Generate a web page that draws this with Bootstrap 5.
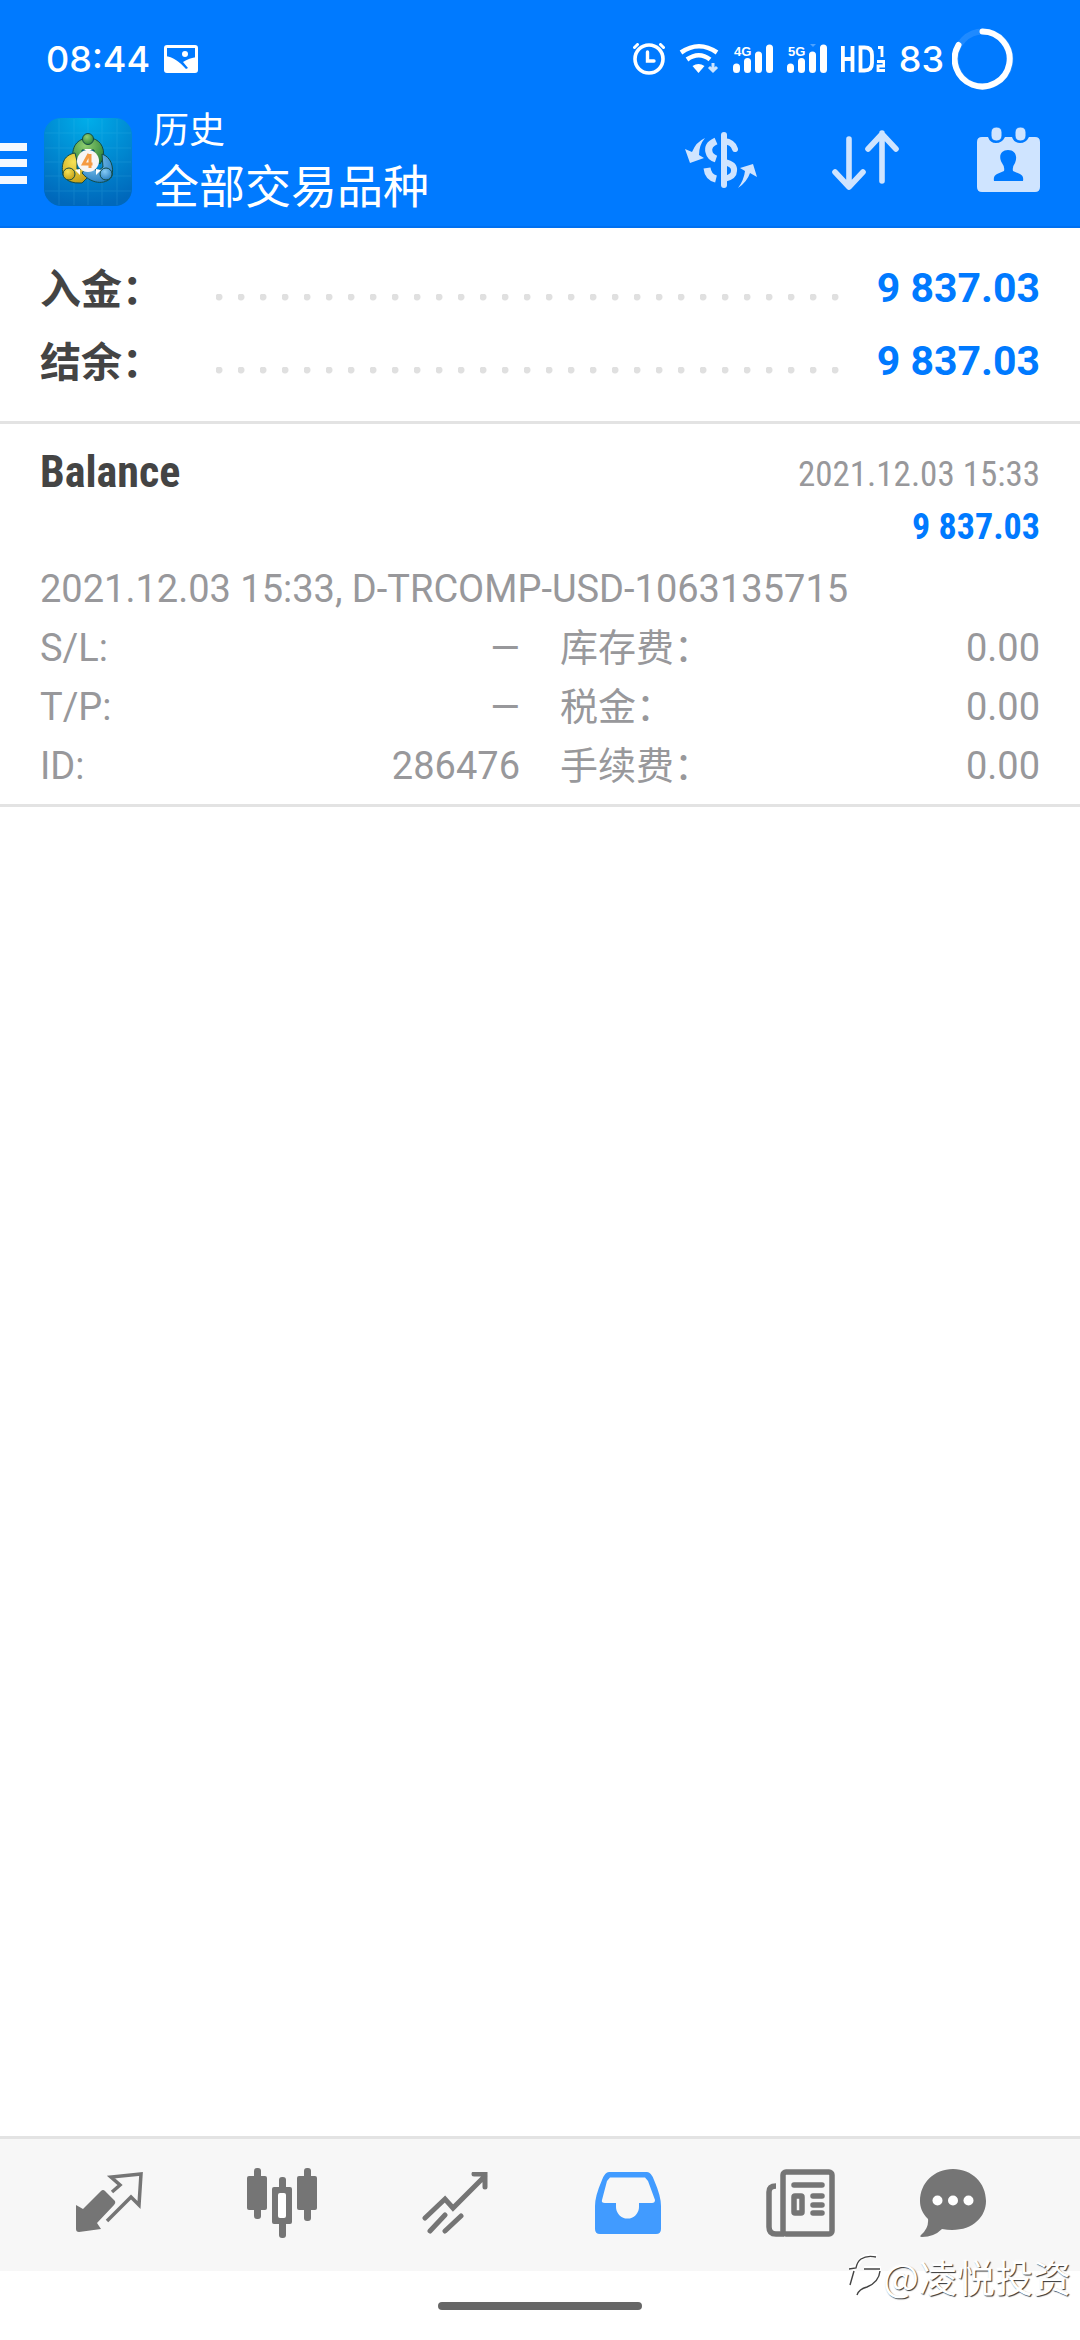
<!DOCTYPE html>
<html lang="zh-CN">
<head>
<meta charset="utf-8">
<meta name="viewport" content="width=device-width, initial-scale=1">
<title>历史</title>
<link href="https://cdn.jsdelivr.net/npm/bootstrap@5.3.0/dist/css/bootstrap.min.css" rel="stylesheet">
<style>
body{font-family:Roboto,"Noto Sans CJK SC",sans-serif;background:#fff;color:#444}
svg{display:block;flex:none}
.top-area{background:#007aff;border-bottom:2px solid #0070f0;color:#fff}
.status{height:106px;padding:12px 66px 0 46px;font:500 36px/48px Inter,sans-serif}
.status .tiny-net{font:700 13px "Liberation Sans",sans-serif}
.status-icons{gap:14px}
.appbar{height:112px;margin-bottom:8px;padding-right:40px}
.appbar button{background:none;border:0;padding:0;color:#cfe4ff}
.app-logo{margin-left:17px}
.appbar .sort-btn{margin:0 78px 0 74px}
.head-sub{font-size:36px;line-height:50px}
.head-main{font-size:46px;line-height:62px}
.head-text{font-family:"Noto Sans CJK SC",sans-serif;margin:0 auto 8px 21px}
.summary{padding:22px 40px 25px;border-bottom:3px solid #e3e3e3;font-weight:700}
.sum-row{height:73px}
.sum-label{width:176px;font:700 41px/73px "Noto Sans CJK SC",sans-serif}
.sum-dots{height:7px;margin:22px 31px 0 0;background:radial-gradient(circle at 3px 3px,#e0e0e0 3px,transparent 4px) 0 0/22px 7px repeat-x}
.sum-value{font-size:41px;line-height:73px;padding-top:4px;color:#007aff}
.deal{padding:21px 40px 8px;border-bottom:3px solid #e3e3e3;color:#98989b}
.narrow{font-family:"Roboto Condensed","Liberation Sans Narrow",Roboto,sans-serif}
.deal-name{font-size:44px;line-height:54px;color:#444}
.deal-time{font-size:35px;line-height:60px}
.deal-sum{font-size:36px;line-height:44px;color:#007aff}
.deal-info{font-size:38px;line-height:59px;padding-top:11px}
.deal-info .info-col{column-gap:40px}
.tabs{background:#f7f7f7;border-top:3px solid #e3e3e3;height:135px;padding:0 61px 0 22px}
.tabs a{flex:173 1 0;height:128px;color:#757575;display:flex;align-items:center;justify-content:center}
.tabs a:last-child{flex-grow:132}
.tabs a.active{color:#419bff}
.home-zone{height:69px}
.home-pill{width:204px;height:8px;border-radius:4px;background:#666}
.watermark{right:9px;bottom:40px;color:#fff;font:38px/48px "Noto Sans CJK SC",sans-serif;text-shadow:1px 1px 1px #333,0 0 3px #fff}
</style>
</head>
<body>
<div class="d-flex flex-column min-vh-100 position-relative">
<header class="top-area">
  <div class="status d-flex align-items-center justify-content-between">
    <div class="d-flex align-items-center status-icons">
      <span>08:44</span>
      <svg width="34" height="28" viewBox="0 0 34 28"><rect x="1.5" y="1.5" width="31" height="25" rx="1.5" fill="none" stroke="#fff" stroke-width="3"/><path d="M1 11C9 12 15 16 22 24L24 23 19 17Q25 13 33 12V27H1Z" fill="#fff"/><circle cx="21" cy="9" r="3" fill="#fff"/></svg>
    </div>
    <div class="d-flex align-items-center status-icons">
      <svg width="32" height="32" viewBox="0 0 32 32" fill="none" stroke="#fff" stroke-linecap="round"><circle cx="16" cy="16" r="14" stroke-width="3.6"/><path d="M14.5 9v9h6.500" stroke-width="3.4"/><path d="M1.500 4.500l3-3M30.500 4.500l-3-3" stroke-width="3"/></svg>
      <svg width="40" height="32" viewBox="0 0 40 32" fill="none" stroke="#fff"><path d="M2 9.500Q20-3 38 9.500M8 16.500Q20 8 31 16.500" stroke-width="4.600"/><path d="M13.500 23Q19.500 19 25.500 23L19.500 30Z" fill="#fff" stroke="none"/><path d="M34 20v8M30 24l4 4 4-4" stroke-width="3" opacity=".8"/></svg>
      <svg width="40" height="32" viewBox="0 0 40 32" stroke="#fff" stroke-width="7" stroke-linecap="round"><text x="1" y="13" class="tiny-net" fill="#fff" stroke="none">4G</text><path d="M3.500 24v2.500M14.500 18.500v8M25.500 12v14.500M36.500 5v21.500"/></svg>
      <svg width="40" height="32" viewBox="0 0 40 32" stroke="#fff" stroke-width="7" stroke-linecap="round"><text x="1" y="13" class="tiny-net" fill="#fff" stroke="none">5G</text><path d="M3.500 24v2.500M14.500 18.500v8M25.500 12v14.500M36.500 5v21.500"/><path d="M23 1h6l-3 3z" stroke="none" fill="#fff" opacity=".3"/></svg>
      <svg width="44" height="28" viewBox="0 0 44 28" fill="none" stroke="#fff" stroke-width="3.800"><path d="M1.900 1v26M11.500 1v26M1.900 14h10M19.500 2.500v23h4Q31 25.500 31 18v-8Q31 2.500 23.500 2.500Z"/><path d="M37 2.500h4V12M36 16.500h7v4.500h-6v4.500h7" stroke-width="2.800"/></svg>
      <span class="d-flex align-items-center gap-2">83
      <svg width="62" height="62" viewBox="0 0 62 62" fill="none" stroke="#fff" stroke-width="6" stroke-linecap="round"><circle cx="31" cy="31" r="27.500" opacity=".12"/><path d="M30.500 3.500A27.500 27.500 0 1 1 6.500 17"/></svg></span>
    </div>
  </div>
  <div class="appbar d-flex align-items-center">
    <button type="button" aria-label="菜单"><svg width="27" height="44" viewBox="0 0 27 44" fill="#f2f8ff"><path d="M0 3h27v8H0zM0 19h27v8H0zM0 36h27v8H0z"/></svg></button>
    <svg class="app-logo" width="88" height="88" viewBox="0 0 88 88">
      <defs>
        <radialGradient id="tile" cx=".5" cy="0" r="1"><stop offset="0" stop-color="#00aeea"/><stop offset="1" stop-color="#0068bb"/></radialGradient>
        <radialGradient id="gr" cx=".4" cy=".3" r=".8"><stop offset="0" stop-color="#8fce70"/><stop offset="1" stop-color="#257d35"/></radialGradient>
        <radialGradient id="ye" cx=".4" cy=".3" r=".8"><stop offset="0" stop-color="#f7e254"/><stop offset="1" stop-color="#bd9710"/></radialGradient>
        <radialGradient id="bl" cx=".4" cy=".3" r=".8"><stop offset="0" stop-color="#86cbf5"/><stop offset="1" stop-color="#1f78bc"/></radialGradient>
      </defs>
      <rect width="88" height="88" rx="17" fill="url(#tile)"/>
      <path d="M15 1v86M30 1v86M44 1v86M58 1v86M73 1v86M1 15h86M1 30h86M1 44h86M1 58h86M1 73h86" stroke="#5fd0f5" stroke-width="1" opacity=".15"/>
      <g stroke="#134b46" stroke-width="1">
        <path d="M29 41C27 26 36 20 45 20S62 28 59 41L56 46 50 41V32H38V41Z" fill="url(#gr)"/>
        <path d="M31 35C19 37 17 47 19 57Q23 66 38 65L46 57 40 51H33V43Z" fill="url(#ye)"/>
        <path d="M58 36C67 39 70 49 68 58 64 66 49 68 38 55L43 48 54 53 59 49Z" fill="url(#bl)"/>
        <circle cx="44" cy="21" r="5.500" fill="url(#gr)"/><circle cx="25" cy="56" r="6" fill="url(#ye)"/><circle cx="62" cy="56" r="6" fill="url(#bl)"/>
      </g>
      <path d="M40 31l4 3 4-3M31 52l5-1v6M57 52l-5-1v6" fill="#fff"/>
      <circle cx="44" cy="43" r="11" fill="#f7f5f5"/>
      <path d="M45 36L39.500 46h9M46 36v14" fill="none" stroke="#f59b43" stroke-width="3"/>
    </svg>
    <div class="head-text">
      <div class="head-sub">历史</div>
      <div class="head-main">全部交易品种</div>
    </div>
    <div class="d-flex align-items-center mb-1">
      <button type="button" aria-label="货币"><svg width="73" height="56" viewBox="0 0 73 56" fill="none" stroke="currentColor" stroke-width="6"><path d="M39 3v50" stroke-linecap="round"/><path d="M31 9Q22 13 24 20 25 25 31 27M22 36Q23 45 31 47" stroke-width="7"/><path d="M39 9Q48 10 50 17" stroke-linecap="round"/><path d="M39 30Q50 32 49 39 49 45 39 47"/><path d="M20 6Q11 10 7 20L0 17 5 31 19 26 14 23Q14 13 20 6ZM53 56Q62 50 65 41L72 45 68 32 55 36 60 39Q59 48 53 56Z" fill="currentColor" stroke="none"/></svg></button>
      <button type="button" aria-label="排序" class="sort-btn"><svg width="67" height="60" viewBox="0 0 67 60" fill="none" stroke="currentColor" stroke-width="5.600" stroke-linecap="round" stroke-linejoin="round"><path d="M17 9v48M3 42l14 15 14-15M50 51V3M36 19L50 4l14 15"/></svg></button>
      <button type="button" aria-label="日期"><svg width="63" height="66" viewBox="0 0 63 66" fill="currentColor"><path d="M5 10H11Q13 16 19 16T28 10H35Q37 16 43 16T52 10H58Q63 10 63 15V60Q63 65 58 65H5Q0 65 0 60V15Q0 10 5 10Z"/><rect x="14" y="0" width="11" height="14" rx="5" stroke="#007aff"/><rect x="38" y="0" width="11" height="14" rx="5" stroke="#007aff"/><path d="M31 23C38 23 41 29 38 36Q35 40 36 44L43 47Q47 49 46 54H17Q16 49 20 47L27 44Q28 40 25 36C21 29 24 23 31 23Z" fill="#007aff"/></svg></button>
    </div>
  </div>
</header>
<main class="flex-grow-1">
  <section class="summary">
    <div class="sum-row d-flex align-items-center"><div class="sum-label">入金：</div><div class="sum-dots flex-grow-1"></div><div class="sum-value">9 837.03</div></div>
    <div class="sum-row d-flex align-items-center"><div class="sum-label">结余：</div><div class="sum-dots flex-grow-1"></div><div class="sum-value">9 837.03</div></div>
  </section>
  <section class="deal">
    <div class="d-flex justify-content-between narrow"><div class="deal-name fw-bold">Balance</div><div class="deal-time">2021.12.03 15:33</div></div>
    <div class="deal-sum narrow fw-bold text-end">9 837.03</div>
    <div class="deal-info">
      <div>2021.12.03 15:33, D-TRCOMP-USD-1063135715</div>
      <div class="info-col d-flex">
        <div class="col"><div class="d-flex justify-content-between"><span>S/L:</span><span>—</span></div><div class="d-flex justify-content-between"><span>T/P:</span><span>—</span></div><div class="d-flex justify-content-between"><span>ID:</span><span>286476</span></div></div>
        <div class="col"><div class="d-flex justify-content-between"><span>库存费：</span><span>0.00</span></div><div class="d-flex justify-content-between"><span>税金：</span><span>0.00</span></div><div class="d-flex justify-content-between"><span>手续费：</span><span>0.00</span></div></div>
      </div>
    </div>
  </section>
</main>
<nav class="tabs d-flex">
  <a href="#" aria-label="行情"><svg width="68" height="64" viewBox="0 0 68 64"><path d="M1 34L8 38 26 20Q28 18 30 20L40 30Q41 32 39 34L22 52 26 58 4 61Q1 61 1 58Z" fill="currentColor"/><path d="M37 21l8-7-9-8 30-3-2 31-8-8-24 24" fill="none" stroke="currentColor" stroke-width="3.500"/></svg></a>
  <a href="#" aria-label="图表"><svg width="70" height="70" viewBox="0 0 70 70" fill="currentColor"><rect x="0" y="8" width="20" height="34" rx="2"/><rect x="7" y="0" width="7" height="51" rx="3"/><rect x="50" y="8" width="20" height="34" rx="2"/><rect x="57" y="0" width="7" height="53" rx="3"/><rect x="32" y="9" width="7" height="61" rx="3"/><rect x="25" y="19" width="20" height="37" rx="2"/><rect x="31" y="25" width="8" height="25" rx="2" fill="#fff"/></svg></a>
  <a href="#" aria-label="交易"><svg width="66" height="62" viewBox="0 0 66 62" fill="none" stroke="currentColor" stroke-width="5" stroke-linecap="round"><path d="M3 46l20-19 8 9L63 4M52 2h11v13M8 59l15-16M23 59l16-15"/></svg></a>
  <a href="#" aria-label="历史" class="active" aria-current="page"><svg width="66" height="62" viewBox="0 0 66 62"><path d="M14 0H52Q56 0 59 8 66 24 66 34V57Q66 62 61 62H5Q0 62 0 57V34Q0 24 7 8 10 0 14 0Z" fill="currentColor"/><path d="M15 5.500H50L53 9 60 28Q60 31 57 31H44V35A11 11 0 0 1 21 35V31H10Q6 31 7 28L12 9Z" fill="#f7f7f7"/></svg></a>
  <a href="#" aria-label="新闻"><svg width="70" height="68" viewBox="0 0 70 68" fill="none" stroke="currentColor" stroke-width="5.500"><rect x="17" y="3" width="49" height="62" rx="3"/><path d="M10 17Q3 17 3 23V58Q3 65 10 65H18"/><path d="M28 16h28M47 27h9M47 36h9M47 44h9" stroke-linecap="round"/><rect x="28" y="27" width="8" height="17" rx="1"/></svg></a>
  <a href="#" aria-label="聊天"><svg width="66" height="68" viewBox="0 0 66 68" fill="currentColor"><path d="M33 0C52 0 66 14 66 32S49 65 22 60Q14 68 2 68-1 68 1 66 9 59 8 50C2 44 0 38 0 32 0 14 14 0 33 0Z"/><g fill="#fff"><circle cx="17.500" cy="31.500" r="5"/><circle cx="33" cy="31.500" r="5"/><circle cx="48.500" cy="31.500" r="5"/></g></svg></a>
</nav>
<div class="home-zone d-flex align-items-center justify-content-center"><div class="home-pill"></div></div>
<div class="watermark position-absolute d-flex align-items-center">
  <svg width="34" height="44" viewBox="0 0 34 44" fill="none"><path d="M1 14L7 13 12 5 20 1 28 2M15 14H30Q30 26 18 32 11 34 8 40M5 16L1 30" stroke="#fff" stroke-width="4"/><path d="M0 15L7 14Q8 8 12 5 18 1 27 3M15 15H31M31 17Q30 28 18 33 10 35 8 41M5 17L1 31" stroke="#444" stroke-width="1.400"/></svg><span>@凌悦投资</span>
</div>
</div>
<script src="https://cdn.jsdelivr.net/npm/bootstrap@5.3.0/dist/js/bootstrap.bundle.min.js"></script>
</body>
</html>
